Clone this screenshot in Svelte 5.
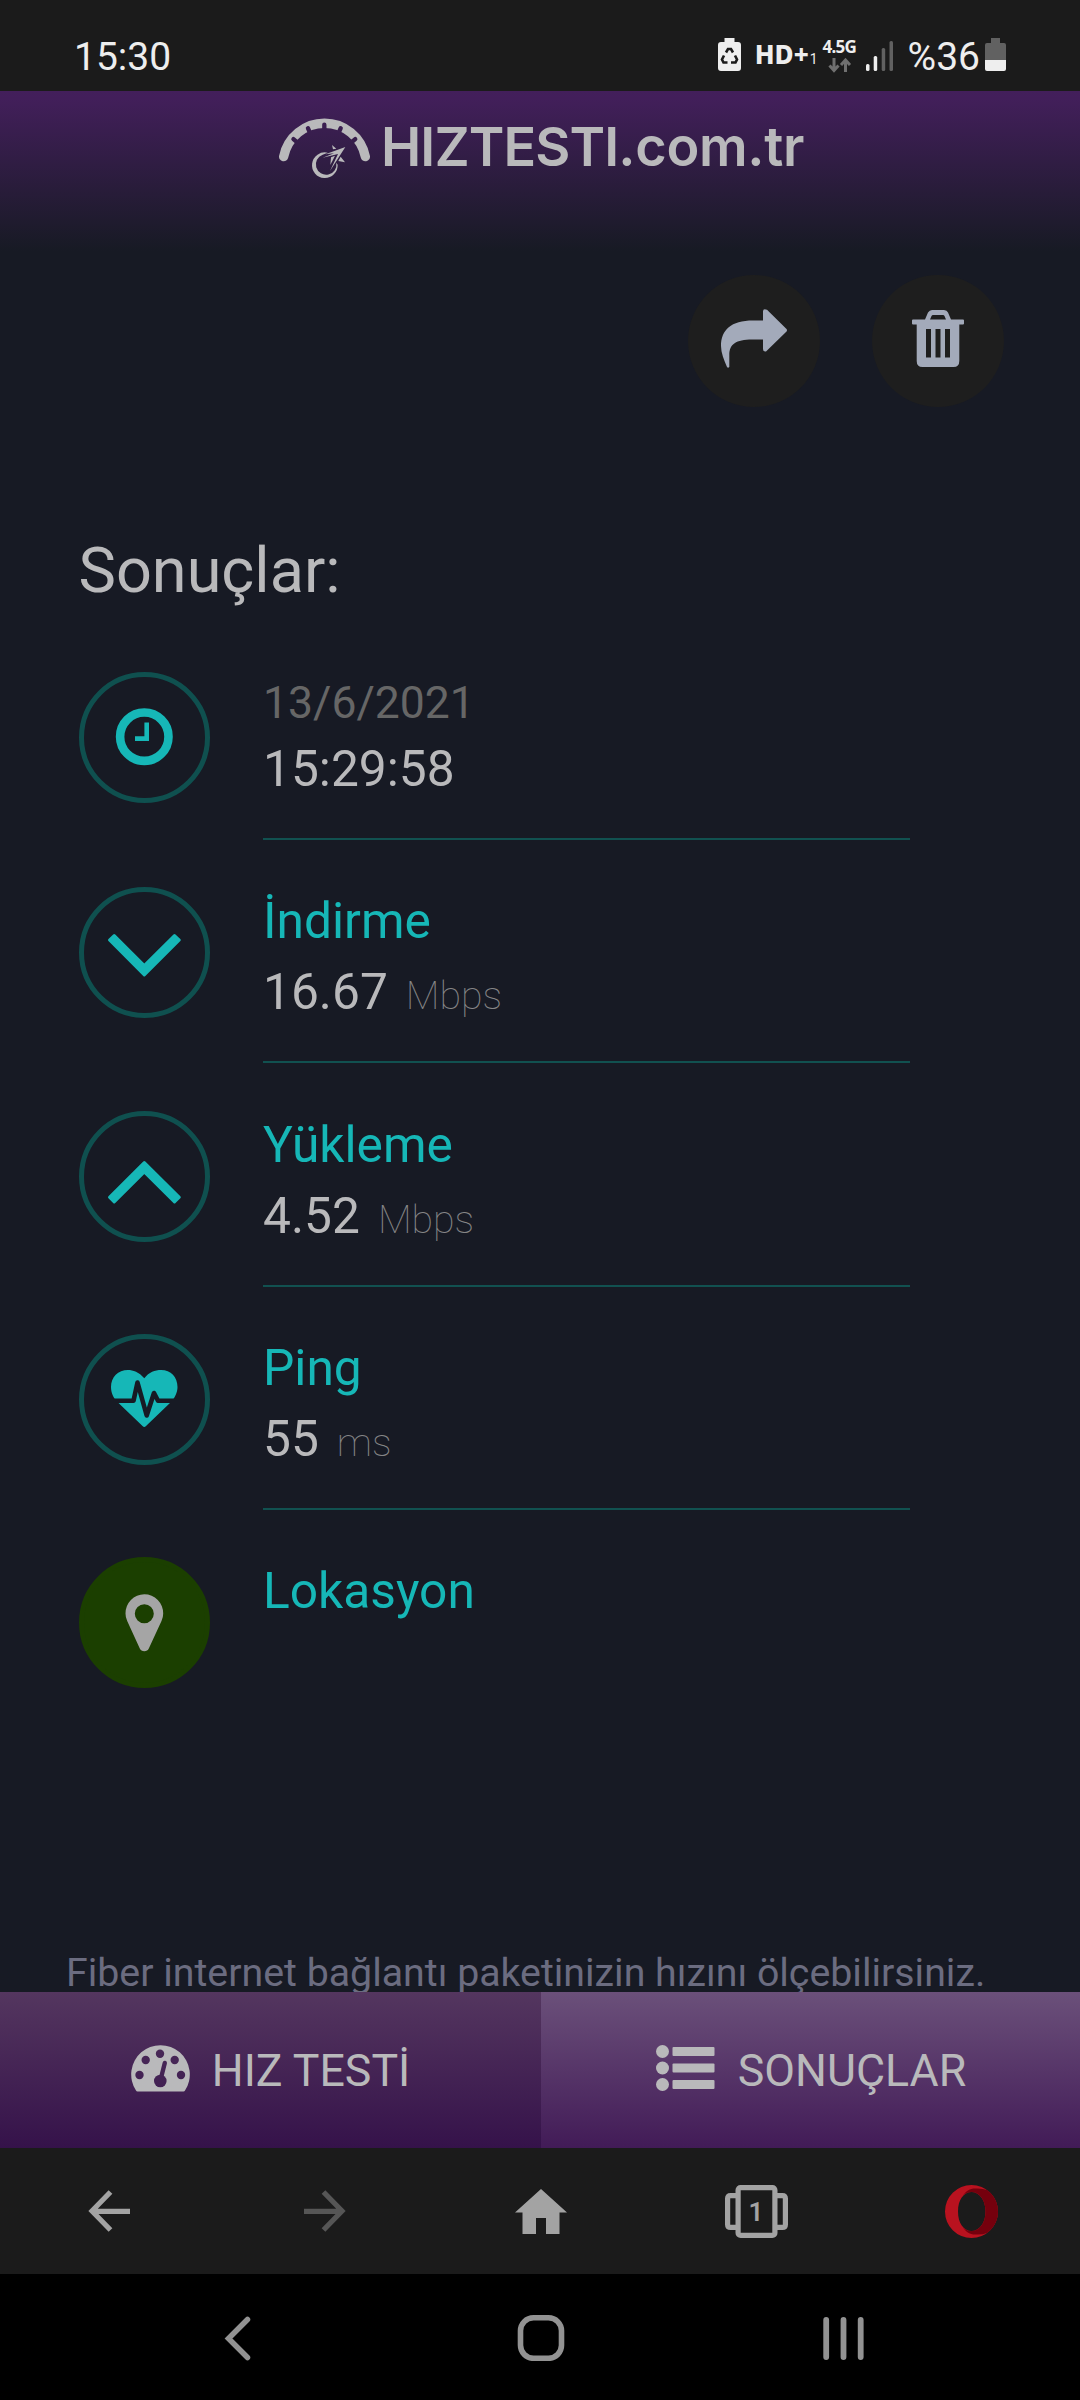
<script lang="ts">
	const results = [
		{ icon: 'down', label: 'İndirme', value: '16.67', unit: 'Mbps' },
		{ icon: 'up', label: 'Yükleme', value: '4.52', unit: 'Mbps' },
		{ icon: 'heart', label: 'Ping', value: '55', unit: 'ms' }
	];

	const notches = [-50, -24, 0, 24, 50];
</script>

<svelte:head>
	<title>Sonuçlar | HIZTESTI.com.tr</title>
</svelte:head>

<div class="phone">
	<div class="status-bar">
		<span class="clock">15:30</span>
		<div class="status-icons">
			<svg class="saver" width="23" height="33" viewBox="0 0 23 33">
				<path d="M6.500 0h10v4H20a3 3 0 0 1 3 3v23a3 3 0 0 1-3 3H3a3 3 0 0 1-3-3V7a3 3 0 0 1 3-3h3.500z" fill="#eee" />
				<path d="M8 14.500L10 11h3l2 3.500M17 17.500l2 4-1.500 3H13M9.500 24.500H5.500l-1.500-3 2-4" fill="none" stroke="#1b1b1b" stroke-width="2.600" />
				<path d="M11.500 14.500l4 5h-2.500v4h-3v-4H7.500z" fill="#eee" />
			</svg>
			<span class="hd">HD+</span>
			<span class="sim">1</span>
			<div class="network">
				<span>4.5G</span>
				<svg width="24" height="15" viewBox="0 0 24 15">
					<path d="M6 0v12M1.500 7.500L6 12.500l4.500-5M17.500 14V2M13 7l4.500-5L22 7" fill="none" stroke="#707070" stroke-width="3" />
				</svg>
			</div>
			<svg class="signal" width="28" height="32" viewBox="0 0 28 32">
				<rect x="0" y="24" width="3.500" height="7" rx="1.500" fill="#eee" />
				<rect x="7.700" y="16" width="3.500" height="15" rx="1.500" fill="#eee" />
				<rect x="15.700" y="8" width="3.500" height="23" rx="1.500" fill="#616161" />
				<rect x="23.500" y="1" width="3.500" height="30" rx="1.500" fill="#616161" />
			</svg>
			<span class="percent">%36</span>
			<svg class="battery" width="21" height="33" viewBox="0 0 21 33">
				<path d="M6 0h9v5h4q2 0 2 2v15H0V7q0-2 2-2h4z" fill="#616161" />
				<path d="M0 22h21v9q0 2-2 2H2q-2 0-2-2z" fill="#eee" />
			</svg>
		</div>
	</div>

	<div class="page">
		<header>
			<svg width="91" height="61" viewBox="26 24 273 183">
				<mask id="ticks" maskUnits="userSpaceOnUse" x="0" y="0" width="330" height="240">
					<rect x="0" y="0" width="330" height="240" fill="#fff" />
					{#each notches as angle}
						<path d="M162 44V75" stroke="#000" stroke-width="13" stroke-linecap="round" transform="rotate({angle} 162 165)" />
					{/each}
				</mask>
				<path d="M40 140A125 125 0 0 1 285 140" fill="none" stroke="#b9b9bb" stroke-width="28" stroke-linecap="round" mask="url(#ticks)" />
				<path d="M172 128A38.500 38.500 0 1 0 202 164L198 158A31 31 0 1 1 157 134Z" fill="#b9b9bb" />
				<path d="M225 111L165 133L191 130L157 143L203 132L179 183Z" fill="#b9b9bb" />
				<path d="M185 105L188 118L198 116ZM211 140L224 157L204 153Z" fill="#b9b9bb" />
				<path d="M182 142L194 137L180 165Z" fill="#b9b9bb" />
			</svg>
			<span class="brand">HIZTESTI<span>.com.tr</span></span>
		</header>

		<div class="actions">
			<button aria-label="Paylaş">
				<svg width="66" height="59" viewBox="0 0 66 59">
					<path d="M42 11.500H32C10 11.500 0 21 0 37C0 44 3 51 6 58Q7 59.500 8.300 58V46C8.300 35 15 30.500 31 30.500H42V40Q42 43 45 42.500L65 23Q67 21 65 19.500L46 .8Q42-1 42 2.500Z" />
				</svg>
			</button>
			<button aria-label="Sil">
				<svg width="52" height="57" viewBox="0 0 52 57">
					<path fill-rule="evenodd" d="M13 9.500L16 2.500Q17.500 0 20 0H32Q35 0 36 2.500L39 9.500H51Q52 9.500 52 10.500V13.500Q52 14.500 51 14.500H47.300V51Q47.300 57 41.500 57H10.500Q4.700 57 4.700 51V14.500H1Q0 14.500 0 13.500V10.500Q0 9.500 1 9.500ZM18 9.500H34L32.500 6Q32 5 31 5H21Q20 5 19.500 6ZM14 19V47.500H19V19ZM23.500 19V47.500H28.500V19ZM33 19V47.500H38V19Z" />
				</svg>
			</button>
		</div>

		<h1>Sonuçlar:</h1>

		<div class="results">
			<div class="row first">
				<div class="ring">
					<svg viewBox="5 5 121 121">
						<circle cx="65.300" cy="64.700" r="24.200" fill="none" stroke="#16b7b7" stroke-width="8.600" />
						<path d="M67.700 50.500V66.600H56" fill="none" stroke="#16b7b7" stroke-width="4.600" />
					</svg>
				</div>
				<div class="info">
					<div class="date">13/6/2021</div>
					<div class="time">15:29:58</div>
				</div>
			</div>

			{#each results as result}
				<div class="row">
					<div class="ring">
						<svg viewBox="5 5 121 121">
							{#if result.icon === 'down'}
								<path class="chevron" d="M30.500 53L35.200 48.500L65.300 78.500L95.500 48.500L100.300 53L65.300 88Z" />
							{:else if result.icon === 'up'}
								<path class="chevron" d="M30.500 86.300L65.300 51.500L100.300 86.300L95.500 91L65.300 61L35.200 91Z" />
							{:else}
								<path d="M65.300 44.300C60 38 54 36 49 36C39 36 32 43 32 53C32 58 34 64 39 68.500L63.500 92Q65.300 93.800 67 92L91.500 68.500C96 64 98.500 58 98.500 53C98.500 43 92 36 82 36C76 36 70 38 65.300 44.300Z" fill="#16b7b7" />
								<path d="M28 66.800H54.500L58.500 48.500L67.700 81.500L75 59L79 66.800H102" fill="none" stroke="#171a24" stroke-width="4.600" stroke-linejoin="round" />
							{/if}
						</svg>
					</div>
					<div class="info">
						<div class="label">{result.label}</div>
						<div class="value">{result.value}<span>{result.unit}</span></div>
					</div>
				</div>
			{/each}

			<div class="row last">
				<div class="ring green">
					<svg viewBox="5 5 121 121">
						<path fill-rule="evenodd" d="M65.300 37.300A18.900 18.900 0 0 1 84.200 56.500Q84.200 60.500 82.500 64L69.800 91.500Q68.500 94.300 65.300 94.300T60.800 91.500L48.200 64Q46.500 60.500 46.500 56.500A18.900 18.900 0 0 1 65.300 37.300ZM65.300 47.200A9.500 9.500 0 1 0 65.300 66.200A9.500 9.500 0 1 0 65.300 47.200Z" fill="#a5a5a5" />
					</svg>
				</div>
				<div class="info">
					<div class="label">Lokasyon</div>
				</div>
			</div>
		</div>

		<p class="note">Fiber internet bağlantı paketinizin hızını ölçebilirsiniz.</p>
	</div>

	<nav class="tabs">
		<div class="tab">
			<svg width="59" height="47" viewBox="0 0 59 47">
				<mask id="dial">
					<rect width="59" height="47" fill="#fff" />
					<circle cx="8.500" cy="30" r="4.200" />
					<circle cx="14.700" cy="15" r="4.200" />
					<circle cx="29" cy="8.800" r="4.200" />
					<circle cx="43.700" cy="15" r="4.200" />
					<circle cx="50" cy="30" r="4.200" />
					<circle cx="29.300" cy="36" r="6.300" />
					<path d="M30 33L33.800 18" stroke="#000" stroke-width="4.400" stroke-linecap="round" />
				</mask>
				<path d="M6.500 46.500Q5.500 46.500 5 45.500A29.300 29.300 0 1 1 54 45.500Q53.500 46.500 52.500 46.500Z" fill="#b9b9bb" mask="url(#dial)" />
			</svg>
			<span>HIZ TESTİ</span>
		</div>
		<div class="tab active">
			<svg width="59" height="47" viewBox="0 0 59 47">
				{#each [6.5, 23, 39.5] as y}
					<circle cx="6.500" cy={y} r="6.500" fill="#b9b9bb" />
					<rect x="16.500" y={y - 4.5} width="42" height="9" rx="1" fill="#b9b9bb" />
				{/each}
			</svg>
			<span>SONUÇLAR</span>
		</div>
	</nav>

	<div class="browser-bar">
		<div class="cell">
			<svg width="42" height="42" viewBox="0 0 42 42" fill="none" stroke="#a3a3a3" stroke-width="5.200">
				<path d="M22.500 2L4 21L22.500 40M5 21.300H42" />
			</svg>
		</div>
		<div class="cell">
			<svg width="42" height="42" viewBox="0 0 42 42" fill="none" stroke="#565656" stroke-width="5.200">
				<path d="M19.500 2L38 21L19.500 40M37 21.300H0" />
			</svg>
		</div>
		<div class="cell">
			<svg width="52" height="45" viewBox="0 0 52 45">
				<path d="M26 0L52 23.500H44.500V45H31V29H21V45H7.500V23.500H0Z" fill="#a3a3a3" />
			</svg>
		</div>
		<div class="cell">
			<svg width="63" height="53" viewBox="0 0 63 53" fill="none" stroke="#a3a3a3" stroke-width="5.200">
				<rect x="13.100" y="2.600" width="36.800" height="47.800" rx="2.500" />
				<path d="M11 10.600H5.600Q2.600 10.600 2.600 13.600V39.400Q2.600 42.400 5.600 42.400H11M52 10.600H57.400Q60.400 10.600 60.400 13.600V39.400Q60.400 42.400 57.400 42.400H52" />
				<text x="31" y="35.500" text-anchor="middle">1</text>
			</svg>
		</div>
		<div class="cell">
			<svg class="opera" width="53" height="53" viewBox="0 0 53 53">
				<path fill-rule="evenodd" d="M26.500 0A26.500 26.500 0 1 0 26.500 53A26.500 26.500 0 1 0 26.500 0ZM26.500 7C34.500 7 40.500 15 40.500 26.500S34.500 46 26.500 46S13 38 13 26.500S18.500 7 26.500 7Z" fill="#b9121f" />
				<path d="M18 10.500C21 6 25 3.500 30 3.500Q37 3 42 5C49 10 53 18 53 26.500S49 43 42 48Q37 50 30 49.500C25 49.500 21 47 18 42.500C21 45.500 24 46 26.500 46C34.500 46 40.500 38 40.500 26.500S34.500 7 26.500 7C24 7 21 7.500 18 10.500Z" fill="#75000d" />
			</svg>
		</div>
	</div>

	<div class="system-nav">
		<svg width="27" height="45" viewBox="0 0 27 45" fill="none" stroke="#929292" stroke-width="5.500" stroke-linecap="round">
			<path d="M23.500 3.500L4.500 22.500L23.500 41.500" />
		</svg>
		<svg class="home" width="48" height="46" viewBox="0 0 48 46" fill="none" stroke="#929292" stroke-width="5.600">
			<rect x="3.500" y="2.800" width="41" height="40.500" rx="13" />
		</svg>
		<svg width="41" height="45" viewBox="0 0 41 45" stroke="#929292" stroke-width="5.800" stroke-linecap="round">
			<path d="M3.200 4V41M20.500 4V41M37.700 4V41" />
		</svg>
	</div>
</div>

<style>
	:global(body) {
		background: #000;
	}

	.phone {
		width: 1080px;
		height: 2400px;
		display: flex;
		flex-direction: column;
		overflow: hidden;
		font-family: Roboto, sans-serif;
		color: #b9b9bb;
	}

	svg {
		display: block;
		flex: none;
	}

	.status-bar {
		flex: none;
		height: 91px;
		box-sizing: border-box;
		padding: 20px 74px 0 74px;
		display: flex;
		justify-content: space-between;
		background: #1b1b1b;
		color: #eee;
		font-size: 39px;
		line-height: 74px;
	}

	.status-icons {
		display: flex;
	}

	.saver,
	.battery {
		margin-top: 18px;
	}

	.hd {
		margin-left: 14px;
		font-family: 'Noto Sans', sans-serif;
		font-weight: 800;
		font-size: 26px;
		line-height: 69px;
	}

	.sim {
		margin-left: 1px;
		font-size: 14px;
		line-height: 78px;
	}

	.network {
		width: 34px;
		margin: 17px 0 0 5px;
		font-family: 'Noto Sans', sans-serif;
		font-weight: 700;
		font-size: 17px;
		line-height: 20px;
		letter-spacing: -0.8px;
	}

	.network svg {
		margin: 1px 0 0 5px;
	}

	.signal {
		margin: 20px 14px 0 9px;
	}

	.battery {
		margin-left: 5px;
	}

	.page {
		flex: none;
		height: 1901px;
		overflow: hidden;
		background: linear-gradient(#431f5b 0, #421f5a 8px, #171a24 160px, #171a24);
	}

	header {
		display: flex;
		gap: 11px;
		padding: 27px 0 0 279px;
		height: 157px;
		box-sizing: border-box;
	}

	.brand {
		font-family: Inter, sans-serif;
		font-weight: 600;
		font-size: 54px;
		line-height: 57px;
		letter-spacing: -0.9px;
	}

	.brand span {
		letter-spacing: -0.3px;
	}

	.actions {
		display: flex;
		justify-content: flex-end;
		gap: 52px;
		padding: 27px 76px 0 0;
	}

	button {
		width: 132px;
		height: 132px;
		padding: 0 0 5px;
		box-sizing: border-box;
		border: 0;
		border-radius: 50%;
		display: flex;
		align-items: center;
		justify-content: center;
		background: #1e1e1e;
		fill: #a3aaba;
	}

	h1 {
		margin: 127px 0 0 78.5px;
		font-size: 63px;
		font-weight: 400;
		line-height: 74px;
	}

	.results {
		padding: 64px 0 0 79px;
	}

	.row {
		display: flex;
		gap: 53px;
		height: 223.5px;
	}

	.row.first {
		height: 215px;
	}

	.ring {
		flex: none;
		width: 131px;
		height: 131px;
		box-sizing: border-box;
		border: 5px solid #0f504f;
		border-radius: 50%;
	}

	.ring.green {
		background: #1b3f00;
		border-color: #1b3f00;
	}

	.chevron {
		fill: #16b7b7;
		stroke: #16b7b7;
		stroke-width: 3;
		stroke-linejoin: round;
	}

	.info {
		width: 647px;
		height: 174px;
		border-bottom: 2px solid #115150;
		white-space: nowrap;
	}

	.first .info {
		height: 166px;
	}

	.last {
		margin-top: -0.6px;
	}

	.last .info {
		border: 0;
	}

	.date {
		font-size: 44.5px;
		line-height: 62px;
		color: #666;
	}

	.time {
		font-size: 49.7px;
		line-height: 71px;
	}

	.label {
		font-size: 49.7px;
		line-height: 68px;
		color: #16b7b7;
	}

	.value {
		font-size: 49.7px;
		line-height: 74px;
	}

	.value span {
		margin-left: 18px;
		font-size: 39.3px;
		font-weight: 100;
		color: #858586;
	}

	.note {
		margin: 170px 0 0 66px;
		font-size: 39.3px;
		line-height: 47px;
		white-space: nowrap;
		color: #6b6c80;
	}

	.tabs {
		flex: none;
		height: 156px;
		display: flex;
	}

	.tab {
		width: 541px;
		box-sizing: border-box;
		display: flex;
		align-items: center;
		justify-content: center;
		gap: 22px;
		font-size: 44.7px;
		background: linear-gradient(#54365f, #35124a);
	}

	.tab svg {
		margin-bottom: 4px;
	}

	.tab span {
		padding-top: 1px;
	}

	.tab.active {
		width: 539px;
		padding-left: 1px;
		gap: 23px;
		background: linear-gradient(#6b507a, #421b57);
	}

	.browser-bar {
		flex: none;
		height: 126px;
		display: flex;
		background: #1b1b1b;
	}

	.cell {
		flex: 1;
		display: flex;
		align-items: center;
		justify-content: center;
		padding-left: 1px;
	}

	.cell text {
		font-family: Roboto, sans-serif;
		font-size: 26px;
		font-weight: 600;
		fill: #a3a3a3;
		stroke: none;
	}

	.opera {
		margin-right: 3px;
	}

	.system-nav {
		flex: 1;
		display: flex;
		align-items: center;
		justify-content: space-between;
		padding: 2px 216px 0 224px;
		background: #000;
	}

	.home {
		margin-left: 7px;
	}
</style>
